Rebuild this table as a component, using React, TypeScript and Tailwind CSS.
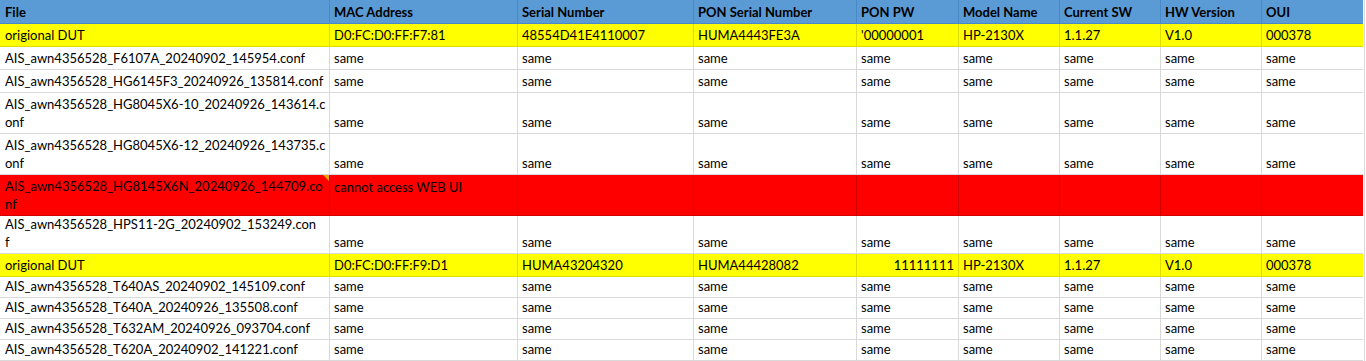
import React from "react";

type Row = {
  h: string;
  kind: "head" | "yellow" | "white" | "red";
  cells: (string | string[])[];
  rightIdx?: number;
};

const S = "same";
const sames = [S, S, S, S, S, S, S, S];

const rows: Row[] = [
  {
    h: "h-[24px]",
    kind: "head",
    cells: ["File", "MAC Address", "Serial Number", "PON Serial Number", "PON PW", "Model Name", "Current SW", "HW Version", "OUI"],
  },
  {
    h: "h-[23px]",
    kind: "yellow",
    cells: ["origional DUT", "D0:FC:D0:FF:F7:81", "48554D41E4110007", "HUMA4443FE3A", "'00000001", "HP-2130X", "1.1.27", "V1.0", "000378"],
  },
  { h: "h-[23px]", kind: "white", cells: ["AIS_awn4356528_F6107A_20240902_145954.conf", ...sames] },
  { h: "h-[23px]", kind: "white", cells: ["AIS_awn4356528_HG6145F3_20240926_135814.conf", ...sames] },
  { h: "h-[41px]", kind: "white", cells: [["AIS_awn4356528_HG8045X6-10_20240926_143614.c", "onf"], ...sames] },
  { h: "h-[41px]", kind: "white", cells: [["AIS_awn4356528_HG8045X6-12_20240926_143735.c", "onf"], ...sames] },
  {
    h: "h-[41px]",
    kind: "red",
    cells: [["AIS_awn4356528_HG8145X6N_20240926_144709.co", "nf"], "cannot access WEB UI", "", "", "", "", "", "", ""],
  },
  { h: "h-[38px]", kind: "white", cells: [["AIS_awn4356528_HPS11-2G_20240902_153249.con", "f"], ...sames] },
  {
    h: "h-[23px]",
    kind: "yellow",
    cells: ["origional DUT", "D0:FC:D0:FF:F9:D1", "HUMA43204320", "HUMA44428082", "11111111", "HP-2130X", "1.1.27", "V1.0", "000378"],
    rightIdx: 4,
  },
  { h: "h-[21px]", kind: "white", cells: ["AIS_awn4356528_T640AS_20240902_145109.conf", ...sames] },
  { h: "h-[21px]", kind: "white", cells: ["AIS_awn4356528_T640A_20240926_135508.conf", ...sames] },
  { h: "h-[21px]", kind: "white", cells: ["AIS_awn4356528_T632AM_20240926_093704.conf", ...sames] },
  { h: "h-[21px]", kind: "white", cells: ["AIS_awn4356528_T620A_20240902_141221.conf", ...sames] },
];

const rowBg: Record<Row["kind"], string> = {
  head: "bg-[#5b9bd5] font-bold border-[#4a89c8]",
  yellow: "bg-[#ffff00] border-[#dcdc00]",
  white: "bg-white border-[#d9d9d9]",
  red: "bg-[#ff0000] border-[#d40000]",
};

export default function App() {
  return (
    <div className="w-[1366px] h-[361px] bg-white overflow-hidden font-['Lato','Liberation_Sans',sans-serif] text-[13px] text-black leading-[18px]">
      <div className="w-[1365px] border-r border-[#d9d9d9]">
        {rows.map((r, ri) => (
          <div
            key={ri}
            className={`grid grid-cols-[330px_188px_176px_163px_102px_101px_101px_101px_101px] ${r.h}`}
          >
            {r.cells.map((c, ci) => {
              const lines = Array.isArray(c) ? c : [c];
              const top = r.kind === "red" && ci === 1;
              return (
                <div
                  key={ci}
                  className={`relative flex flex-col overflow-hidden whitespace-nowrap border-b ${
                    ci < 8 ? "border-r" : ""
                  } ${rowBg[r.kind]} ${top ? "justify-start pt-[3px]" : "justify-end pb-[2px]"} ${
                    r.rightIdx === ci ? "items-end pr-[4px]" : "items-start pl-[4px]"
                  } ${ci === 0 ? "pl-[5px]" : ""}`}
                >
                  {lines.map((l, li) => (
                    <span key={li}>{l}</span>
                  ))}
                  {r.kind === "red" && ci === 0 && (
                    <span className="absolute right-0 top-0 w-0 h-0 border-t-[6px] border-l-[6px] border-t-[#f0a30a] border-l-transparent" />
                  )}
                </div>
              );
            })}
          </div>
        ))}
      </div>
    </div>
  );
}
